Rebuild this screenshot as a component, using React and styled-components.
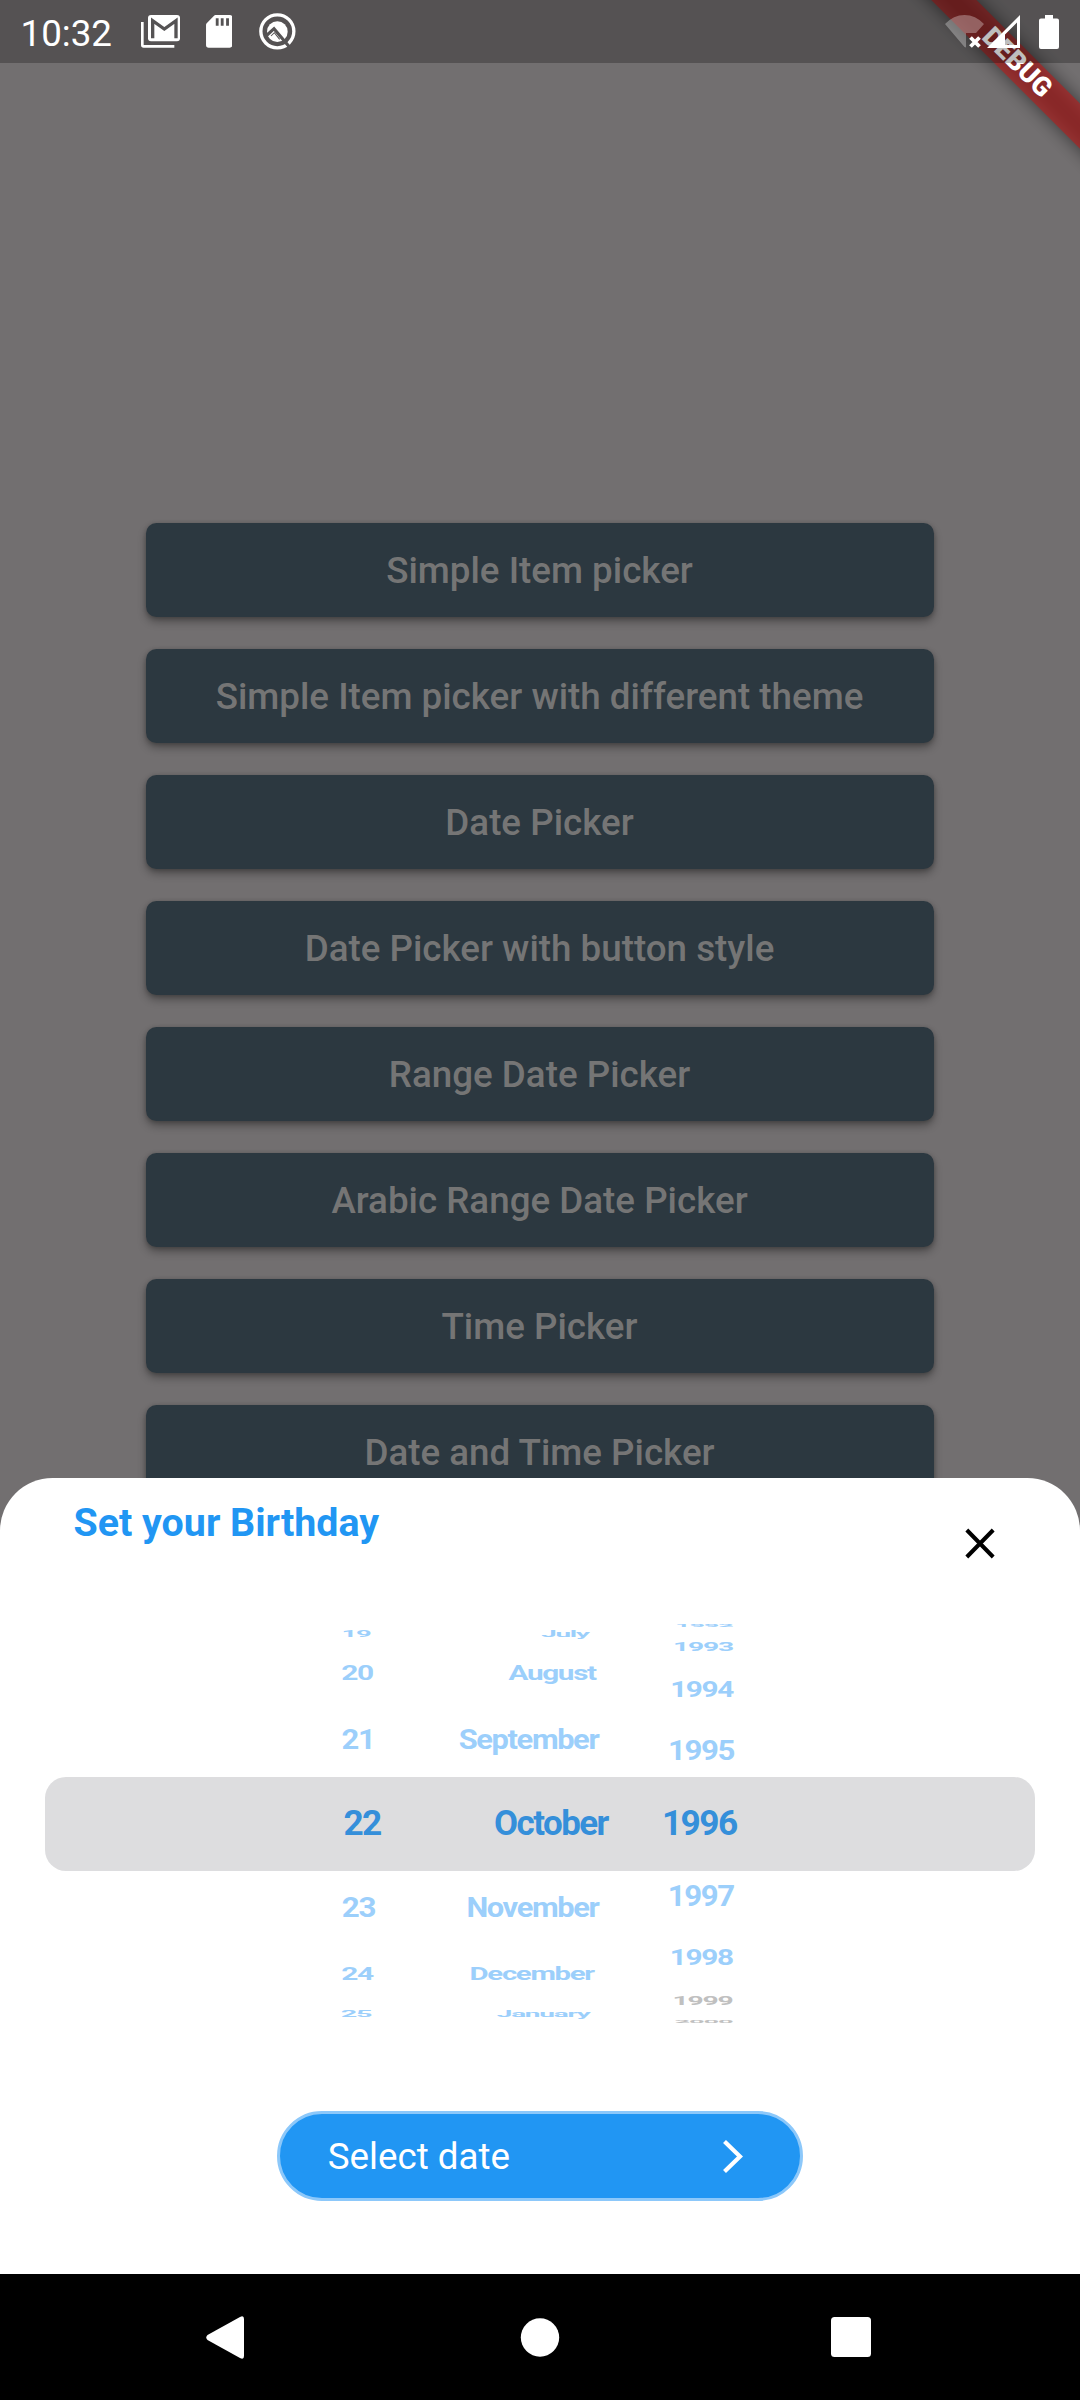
import React from "react";
import styled, { createGlobalStyle } from "styled-components";

const Global = createGlobalStyle`
  *, *::before, *::after { box-sizing: border-box; }
  html, body { margin: 0; padding: 0; background: #726f70; }
  body { font-family: Roboto, "Noto Sans", sans-serif; }
  button { font: inherit; border: 0; background: none; padding: 0; }
  svg { display: block; flex: none; }
`;

const Screen = styled.div`
  position: relative;
  display: flex;
  flex-direction: column;
  width: 1080px;
  height: 2400px;
  overflow: hidden;
  background: #726f70;
`;

const Body = styled.main`
  position: relative;
  flex: 1;
  min-height: 0;
  overflow: hidden;
`;

const DemoList = styled.div`
  display: flex;
  flex-direction: column;
  align-items: center;
  gap: 31.5px;
  padding-top: 522.75px;
`;

const DemoButton = styled.button`
  width: 787.5px;
  height: 94.5px;
  flex: none;
  border-radius: 10.5px;
  background: #2c3840;
  color: #757575;
  font-size: 36.75px;
  font-weight: 500;
  line-height: 44px;
  padding: 2px 1px 0 0;
  white-space: nowrap;
  box-shadow: 0 5px 8px rgba(0, 0, 0, 0.3), 0 1px 4px rgba(0, 0, 0, 0.22);
`;

const Ribbon = styled.div`
  position: absolute;
  top: 62.7px;
  left: 1017.3px;
  width: 420px;
  height: 31.5px;
  margin: -15.75px 0 0 -210px;
  transform: rotate(45deg);
  background: rgba(183, 28, 28, 0.627);
  color: #fff;
  font-size: 26.8px;
  font-weight: 900;
  line-height: 31.5px;
  text-align: center;
`;

const RibbonShadow = styled(Ribbon)`
  background: rgba(0, 0, 0, 0.5);
  filter: blur(9px);
`;

const StatusBar = styled.header`
  position: absolute;
  inset: 0 0 auto 0;
  height: 63px;
  display: flex;
  align-items: center;
  justify-content: space-between;
  padding: 0 21px 0 20.5px;
  background: rgba(0, 0, 0, 0.255);
`;

const StatusGroup = styled.div`
  display: flex;
  align-items: center;
  gap: ${(p) => p.$gap}px;
`;

const BatterySlot = styled.div`
  padding-left: 16px;
`;

const Clock = styled.span`
  width: 97px;
  margin-right: -2.5px;
  color: #fff;
  font-size: 36.75px;
  line-height: 44px;
  padding-top: 4px;
`;

const Sheet = styled.section`
  position: absolute;
  inset: auto 0 0 0;
  height: 796.3px;
  display: flex;
  flex-direction: column;
  border-radius: 52.5px 52.5px 0 0;
  background: #fff;
`;

const SheetHeader = styled.div`
  display: flex;
  justify-content: space-between;
  height: 122.3px;
  padding: 22.5px 74px 0 73.5px;
`;

const Title = styled.h1`
  margin: 0;
  color: #2196f3;
  font-size: 39.375px;
  font-weight: 700;
  line-height: 46px;
`;

const CloseButton = styled.button`
  display: grid;
  place-items: center;
  width: 53px;
  height: 87px;
`;

const Wheels = styled.div`
  display: grid;
  grid-template-columns: 366.3px 220px 404px;
  justify-content: center;
  height: 447px;
  margin: 0 44.7px 0 44.7px;
`;

const Wheel = styled.div`
  display: grid;
  grid-template: 1fr / 1fr;
  align-items: center;
  justify-items: end;
`;

const Band = styled.div`
  grid-area: 1 / 1;
  width: 100%;
  height: 94px;
  background: #dddddf;
  border-radius: ${(p) => p.$radius};
`;

const WheelItem = styled.span`
  grid-area: 1 / 1;
  color: ${(p) => p.$color};
  font-size: 35.6px;
  font-weight: 700;
  line-height: 44px;
  letter-spacing: -1.575px;
  white-space: nowrap;
  transform-origin: right center;
  transform: translate(${(p) => -p.$inset}px, ${(p) => p.$shift - 1}px)
    scale(${(p) => p.$sx}, ${(p) => p.$sy});
`;

const SelectButton = styled.button`
  display: flex;
  align-items: center;
  justify-content: space-between;
  align-self: center;
  width: 525.5px;
  height: 89.7px;
  margin-top: 64px;
  padding: 1.5px 57px 0 47.5px;
  border: 3px solid #8cc8fa;
  border-radius: 45px;
  background: #2196f3;
  color: #fff;
  font-size: 36.75px;
  line-height: 44px;
`;

const NavBar = styled.nav`
  display: grid;
  grid-template-columns: 1fr 39px 1fr;
  align-items: center;
  height: 126px;
  padding: 0 209px 0 206px;
  background: #000;
`;

const NavSlot = styled.div`
  display: flex;
  justify-content: ${(p) => p.$side};
`;

const demos = [
  "Simple Item picker",
  "Simple Item picker with different theme",
  "Date Picker",
  "Date Picker with button style",
  "Range Date Picker",
  "Arabic Range Date Picker",
  "Time Picker",
  "Date and Time Picker",
];

const SOFT = "#9ccffb";
const ACTIVE = "#358fda";
const MUTED = "#c0c0c0";

// [label, inset from the column's right edge, vertical shift, scaleX, scaleY, colour]
const wheels = [
  {
    radius: "21px 0 0 21px",
    items: [
      ["19", 40.2, -189.1, 0.77, 0.24, SOFT],
      ["20", 37.8, -149.5, 0.84, 0.55, SOFT],
      ["21", 36.3, -83, 0.87, 0.78, SOFT],
      ["22", 30, 0, 0.99, 1, ACTIVE],
      ["23", 35.7, 84, 0.88, 0.8, SOFT],
      ["24", 37.8, 150.3, 0.84, 0.54, SOFT],
      ["25", 39.5, 190.8, 0.81, 0.25, SOFT],
    ],
  },
  {
    radius: "0",
    items: [
      ["July", 42.2, -189.1, 0.78, 0.24, SOFT],
      ["August", 35, -149.5, 0.833, 0.55, SOFT],
      ["September", 33, -83, 0.865, 0.78, SOFT],
      ["October", 23.2, 0, 0.98, 1, ACTIVE],
      ["November", 33, 84, 0.866, 0.8, SOFT],
      ["December", 37.8, 150.3, 0.825, 0.54, SOFT],
      ["January", 41.6, 190.8, 0.785, 0.25, SOFT],
    ],
  },
  {
    radius: "0 21px 21px 0",
    items: [
      ["1992", 302.7, -197.6, 0.765, 0.11, SOFT],
      ["1993", 302.4, -176.1, 0.795, 0.37, SOFT],
      ["1994", 302.3, -133.5, 0.835, 0.63, SOFT],
      ["1995", 301.3, -72, 0.875, 0.79, SOFT],
      ["1996", 298.8, 0, 0.99, 1, ACTIVE],
      ["1997", 301.7, 73.7, 0.875, 0.81, SOFT],
      ["1998", 302.6, 135, 0.835, 0.61, SOFT],
      ["1999", 302.9, 177.2, 0.795, 0.36, MUTED],
      ["2000", 302.9, 198.7, 0.77, 0.12, MUTED],
    ],
  },
];

const MailIcon = () => (
  <svg width="39" height="33" viewBox="423 45 117 99">
    <path d="M423 66h8v69h92v8h-92a8 8 0 0 1-8-8z" fill="#fff" />
    <rect x="444" y="45" width="96" height="79" rx="9" fill="#fff" />
    <path d="M458 115V62L493 87L528 62V115" fill="none" stroke="#555354" strokeWidth="10" />
  </svg>
);

const SdIcon = () => (
  <svg width="26.4" height="33" viewBox="617 45 79 99">
    <path
      d="M645 45h43a8 8 0 0 1 8 8v82a8 8 0 0 1-8 8h-63a8 8 0 0 1-8-8V75q0-3 2-5l22-23q2-2 4-2z"
      fill="#fff"
    />
    <path d="M650.500 55v22M665.500 55v22M681.500 55v22" stroke="#555354" strokeWidth="8.500" />
  </svg>
);

const SystemIcon = () => (
  <svg width="37.700" height="36.700" viewBox="773 39 113 110">
    <circle cx="831" cy="94" r="49.500" fill="none" stroke="#fff" strokeWidth="10" />
    <circle cx="831" cy="95" r="31" fill="#fff" />
    <path d="M797 108L821 86L868 142" fill="none" stroke="#555354" strokeWidth="9.500" />
    <path d="M812 108L822 98L838 118" fill="none" stroke="#555354" strokeWidth="3" />
  </svg>
);

const WifiIcon = () => (
  <svg width="39" height="33" viewBox="0 0 39 33">
    <path
      d="M0 9Q8.500 0 19.500 0T39 9L31 18H21V32.500L19.500 32z"
      fill="#fff"
      fillOpacity="0.3"
    />
    <path d="M25.500 22.500l9 9M34.500 22.500l-9 9" stroke="#fff" strokeWidth="3.800" />
  </svg>
);

const SignalIcon = () => (
  <svg width="33" height="33" viewBox="0 0 33 33">
    <path d="M0 33L33 0V33zM18 30H30V7.500L18 19.500z" fill="#fff" fillRule="evenodd" />
  </svg>
);

const BatteryIcon = () => (
  <svg width="20" height="34" viewBox="0 0 20 34">
    <path
      d="M6 0h8v3.500h4a2 2 0 0 1 2 2V32a2 2 0 0 1-2 2H2a2 2 0 0 1-2-2V5.500a2 2 0 0 1 2-2h4z"
      fill="#fff"
    />
  </svg>
);

const CloseIcon = () => (
  <svg width="30" height="31" viewBox="0 0 30 31">
    <path d="M1.800 2L28.200 29M28.200 2L1.800 29" stroke="#000" strokeWidth="4" />
  </svg>
);

const ChevronIcon = () => (
  <svg width="20" height="33" viewBox="0 0 20 33">
    <path d="M1.500 1.500L17 16.500L1.500 31.500" fill="none" stroke="#fff" strokeWidth="4.200" />
  </svg>
);

const BackIcon = () => (
  <svg width="38" height="43" viewBox="0 0 38 43">
    <path
      d="M1.500 19L34 1Q38 -1 38 3V40Q38 44 34 42L1.500 24Q-1 21.500 1.500 19z"
      fill="#fff"
    />
  </svg>
);

const HomeIcon = () => (
  <svg width="42" height="39" viewBox="0 0 42 39">
    <circle cx="21" cy="19.500" r="19.200" fill="#fff" />
  </svg>
);

const RecentsIcon = () => (
  <svg width="40" height="40" viewBox="0 0 40 40">
    <rect width="40" height="40" rx="3.500" fill="#fff" />
  </svg>
);

export default function App() {
  return (
    <Screen>
      <Global />
      <Body>
        <DemoList>
          {demos.map((label) => (
            <DemoButton key={label}>{label}</DemoButton>
          ))}
        </DemoList>
        <Sheet>
          <SheetHeader>
            <Title>Set your Birthday</Title>
            <CloseButton aria-label="Close">
              <CloseIcon />
            </CloseButton>
          </SheetHeader>
          <Wheels>
            {wheels.map((wheel) => (
              <Wheel key={wheel.radius}>
                <Band $radius={wheel.radius} />
                {wheel.items.map(([label, inset, shift, sx, sy, color]) => (
                  <WheelItem
                    key={label}
                    $inset={inset}
                    $shift={shift}
                    $sx={sx}
                    $sy={sy}
                    $color={color}
                  >
                    {label}
                  </WheelItem>
                ))}
              </Wheel>
            ))}
          </Wheels>
          <SelectButton>
            <span>Select date</span>
            <ChevronIcon />
          </SelectButton>
        </Sheet>
      </Body>
      <NavBar>
        <NavSlot $side="flex-start">
          <BackIcon />
        </NavSlot>
        <HomeIcon />
        <NavSlot $side="flex-end">
          <RecentsIcon />
        </NavSlot>
      </NavBar>
      <RibbonShadow aria-hidden="true" />
      <Ribbon>DEBUG</Ribbon>
      <StatusBar>
        <StatusGroup $gap={26}>
          <Clock>10:32</Clock>
          <MailIcon />
          <SdIcon />
          <SystemIcon />
        </StatusGroup>
        <StatusGroup $gap={3}>
          <WifiIcon />
          <SignalIcon />
          <BatterySlot>
            <BatteryIcon />
          </BatterySlot>
        </StatusGroup>
      </StatusBar>
    </Screen>
  );
}
